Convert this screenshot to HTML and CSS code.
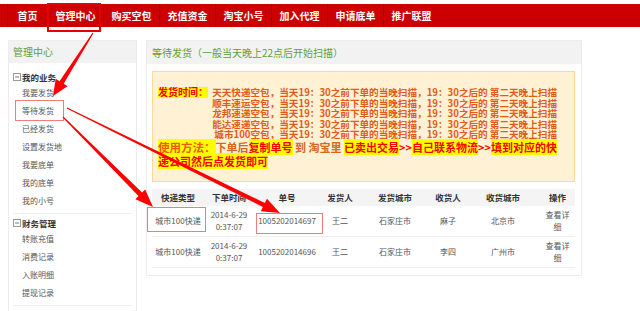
FILE: index.html
```html
<!DOCTYPE html>
<html lang="zh-CN">
<head>
    <meta charset="UTF-8">
    <meta name="viewport" content="width=device-width, initial-scale=1.0">
    <title>等待发货</title>
    <link rel="stylesheet" href="styles.css">
</head>
<body>
    <div class="topnav">
        <ul>
            <li class="home"><a href="#">首页</a></li>
            <li><a href="#">管理中心</a></li>
            <li><a href="#">购买空包</a></li>
            <li><a href="#">充值资金</a></li>
            <li><a href="#">淘宝小号</a></li>
            <li><a href="#">加入代理</a></li>
            <li><a href="#">申请底单</a></li>
            <li><a href="#">推广联盟</a></li>
        </ul>
    </div>

    <div class="wrap">
        <div class="side">
            <div class="side-head">管理中心</div>
            <div class="group first">
                <div class="group-title"><svg class="fold" width="8" height="8" viewBox="0 0 8 8"><rect x="0.5" y="0.5" width="7" height="7" fill="none" stroke="#999"/><line x1="2" y1="4" x2="6" y2="4" stroke="#777"/></svg>我的业务</div>
                <a href="#">我要发货</a>
                <a href="#">等待发货</a>
                <a href="#">已经发货</a>
                <a href="#">设置发货地</a>
                <a href="#">我要底单</a>
                <a href="#">我的底单</a>
                <a href="#">我的小号</a>
            </div>
            <div class="group">
                <div class="group-title"><svg class="fold" width="8" height="8" viewBox="0 0 8 8"><rect x="0.5" y="0.5" width="7" height="7" fill="none" stroke="#999"/><line x1="2" y1="4" x2="6" y2="4" stroke="#777"/></svg>财务管理</div>
                <a href="#">转账充值</a>
                <a href="#">消费记录</a>
                <a href="#">入账明细</a>
                <a href="#">提现记录</a>
            </div>
            <div class="group">
                <div class="group-title"><svg class="fold" width="8" height="8" viewBox="0 0 8 8"><rect x="0.5" y="0.5" width="7" height="7" fill="none" stroke="#999"/><line x1="2" y1="4" x2="6" y2="4" stroke="#777"/></svg>账号管理</div>
            </div>
        </div>

        <div class="main">
            <div class="main-head">等待发货（一般当天晚上22点后开始扫描）</div>
            <div class="main-body">
                <div class="notice">
                    <div class="times">
                        <span class="hl label">发货时间：</span>
                        <div class="lines">
                            <div>天天快递空包，当天19：30之前下单的当晚扫描，19：30之后的 第二天晚上扫描</div>
                            <div>顺丰速运空包，当天19：30之前下单的当晚扫描，19：30之后的 第二天晚上扫描</div>
                            <div>龙邦速递空包，当天19：30之前下单的当晚扫描，19：30之后的 第二天晚上扫描</div>
                            <div>能达速递空包，当天19：30之前下单的当晚扫描，19：30之后的 第二天晚上扫描</div>
                            <div>城市100空包，当天19：30之前下单的当晚扫描，19：30之后的 第二天晚上扫描</div>
                        </div>
                    </div>
                    <p class="usage"><span class="hl big">使用方法：</span>下单后<span class="hl">复制单号</span> 到 淘宝里 <span class="hl">已卖出交易</span><span class="red">&gt;&gt;</span><span class="hl">自己联系物流</span><span class="red">&gt;&gt;</span><span class="hl">填到对应的快递公司然后点发货即可</span></p>
                </div>

                <table class="orders">
                    <thead>
                        <tr>
                            <th class="c1">快递类型</th>
                            <th class="c2">下单时间</th>
                            <th class="c3">单号</th>
                            <th class="c4">发货人</th>
                            <th class="c5">发货城市</th>
                            <th class="c6">收货人</th>
                            <th class="c7">收货城市</th>
                            <th class="c8">操作</th>
                        </tr>
                    </thead>
                    <tbody>
                        <tr>
                            <td class="nowrap">城市100快递</td>
                            <td>2014-6-29 0:37:07</td>
                            <td class="nowrap">1005202014697</td>
                            <td>王二</td>
                            <td>石家庄市</td>
                            <td>麻子</td>
                            <td>北京市</td>
                            <td><a href="#">查看详细</a></td>
                        </tr>
                        <tr>
                            <td class="nowrap">城市100快递</td>
                            <td>2014-6-29 0:37:07</td>
                            <td class="nowrap">1005202014696</td>
                            <td>王二</td>
                            <td>石家庄市</td>
                            <td>李四</td>
                            <td>广州市</td>
                            <td><a href="#">查看详细</a></td>
                        </tr>
                    </tbody>
                </table>
            </div>
        </div>
    </div>

    <!-- annotation marks drawn over the page -->
    <svg class="marks" width="640" height="311" viewBox="0 0 640 311">
        <rect x="48" y="4" width="52" height="27" fill="none" stroke="#e60000" stroke-width="2"/>
        <rect x="15.5" y="100.5" width="48" height="20" fill="none" stroke="#f07c7c"/>
        <rect x="147.5" y="207.5" width="58" height="24" fill="none" stroke="#f07c7c"/>
        <rect x="256.5" y="213.5" width="66" height="20" fill="none" stroke="#f07c7c"/>
        <polygon fill="#f00" points="93.5,33.3 63.7,83.8 67.5,86.3 53,96 55.7,78.7 59.5,81.2 92.5,32.7"/>
        <polygon fill="#f00" points="66.8,108.4 262.9,207.0 260.8,211.3 280,213 267.0,198.7 264.9,203.0 67.2,107.6"/>
        <polygon fill="#f00" points="62.6,117.4 138.5,196.1 135.4,199.2 153,207 145.2,189.4 142.1,192.5 63.4,116.6"/>
    </svg>
</body>
</html>
```

FILE: styles.css
```css
body {
    margin: 0;
    font-family: "Noto Sans CJK SC", sans-serif;
    background: #fff;
    color: #555;
    position: relative;
}
a {
    text-decoration: none;
    color: inherit;
}

.topnav {
    margin-top: 4px;
    height: 23px;
    background: #cc0000;
}
.topnav ul {
    list-style: none;
    margin: 0;
    padding: 0 0 0 7px;
    display: flex;
    height: 100%;
}
.topnav li {
    border-left: 1px solid #a60000;
}
.topnav a {
    display: block;
    width: 55px;
    line-height: 23px;
    text-align: center;
    color: #fff;
    font-size: 10px;
    font-weight: bold;
}
.topnav li.home a {
    width: 39px;
}

.wrap {
    display: flex;
    align-items: flex-start;
    gap: 9px;
    margin-top: 13px;
    padding-left: 8px;
}

.side {
    width: 127px;
    border: 1px solid #ededed;
    border-bottom: none;
}
.side-head {
    height: 22px;
    line-height: 22px;
    background: #f2f2f2;
    color: #5ea03a;
    font-size: 10px;
    padding-left: 4px;
}
.group {
    margin: 0 4px;
    padding: 2px 0 3px;
    border-bottom: 1px solid #eee;
}
.group.first {
    padding-top: 7px;
}
.group-title {
    display: flex;
    align-items: center;
    font-size: 8.5px;
    font-weight: bold;
    color: #333;
    line-height: 14px;
}
.fold {
    margin-right: 1px;
}
.group a {
    display: block;
    font-size: 8px;
    line-height: 18px;
    padding-left: 9px;
    color: #555;
}

.main {
    width: 434px;
    border: 1px solid #ededed;
}
.main-head {
    height: 23px;
    line-height: 23px;
    background: #f2f2f2;
    color: #5ea03a;
    font-size: 10px;
    padding-left: 5px;
}
.main-body {
    padding: 7px 6px 7px 5px;
}

.notice {
    background: #fff1d3;
    border: 1px solid #fbd89c;
    padding: 15px 14px 13px 5px;
}
.times {
    display: flex;
    font-weight: bold;
    line-height: 10.6px;
    color: #e35b1b;
}
.times .label {
    align-self: flex-start;
    font-size: 10px;
    white-space: nowrap;
}
.lines {
    flex: 1;
    text-align: right;
    white-space: nowrap;
    font-size: 9.6px;
    padding-right: 3px;
}
.hl {
    background: #ffff00;
    color: #f00;
}
.red {
    color: #f00;
}
.usage {
    margin: 0;
    font-size: 11px;
    font-weight: bold;
    line-height: 14px;
    color: #d8661c;
}
.usage .big {
    font-size: 11.5px;
    color: #f05a00;
}

.orders {
    width: 100%;
    margin-top: 7px;
    border-collapse: collapse;
    table-layout: fixed;
}
.orders th {
    height: 17px;
    padding: 0;
    background: #f4f4f4;
    font-size: 8.5px;
    font-weight: bold;
    color: #333;
    text-align: center;
}
.orders td {
    height: 30px;
    padding: 0 3px;
    border-bottom: 1px solid #eee;
    font-size: 8px;
    line-height: 12px;
    text-align: center;
    color: #555;
}
.orders td.nowrap {
    white-space: nowrap;
    padding: 0;
}
.c1 { width: 52px; }
.c2 { width: 50px; }
.c3 { width: 66px; }
.c4 { width: 40px; }
.c5 { width: 70px; }
.c6 { width: 36px; }
.c7 { width: 74px; }
.c8 { width: 35px; }

.marks {
    position: absolute;
    top: 0;
    left: 0;
    pointer-events: none;
}
```
